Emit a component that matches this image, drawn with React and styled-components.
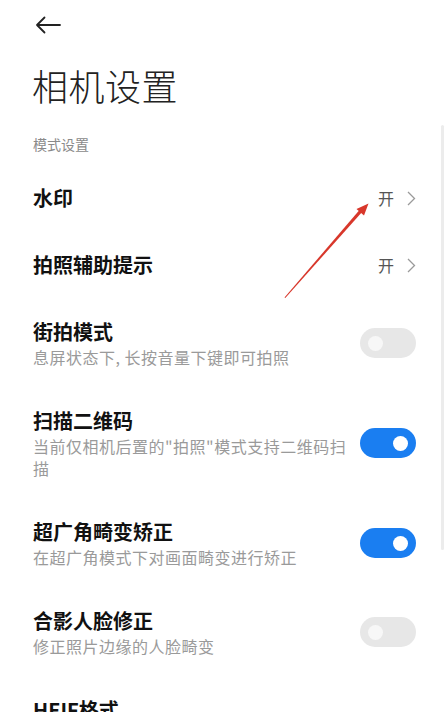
import styled, { createGlobalStyle } from "styled-components";

const GlobalStyle = createGlobalStyle`
  html, body {
    margin: 0;
    padding: 0;
    background: #ffffff;
  }
  body {
    font-family: "Noto Sans CJK SC", "Noto Sans", sans-serif;
    overflow: hidden;
  }
`;

const SETTINGS = [
  { id: "watermark", title: "水印", value: "开" },
  { id: "assist", title: "拍照辅助提示", value: "开" },
  {
    id: "street",
    title: "街拍模式",
    desc: "息屏状态下, 长按音量下键即可拍照",
    toggle: false,
  },
  {
    id: "qrcode",
    title: "扫描二维码",
    desc: '当前仅相机后置的"拍照"模式支持二维码扫描',
    toggle: true,
  },
  {
    id: "wide",
    title: "超广角畸变矫正",
    desc: "在超广角模式下对画面畸变进行矫正",
    toggle: true,
  },
  {
    id: "face",
    title: "合影人脸修正",
    desc: "修正照片边缘的人脸畸变",
    toggle: false,
  },
  { id: "heif", title: "HEIF格式" },
];

const BackIcon = () => (
  <svg width="26" height="18" viewBox="0 0 26 18" fill="none">
    <path
      d="M25 9H2M9.5 1.5L2 9l7.5 7.5"
      stroke="#222"
      strokeWidth="1.8"
      strokeLinecap="round"
      strokeLinejoin="round"
    />
  </svg>
);

const Chevron = () => (
  <svg width="9" height="15" viewBox="0 0 9 15" fill="none">
    <path d="M1 1l6.5 6.5L1 14" stroke="#9a9a9a" strokeWidth="1.3" />
  </svg>
);

const App = () => {
  return (
    <Page>
      <GlobalStyle />
      <TopBar>
        <BackBtn>
          <BackIcon />
        </BackBtn>
      </TopBar>
      <Title>相机设置</Title>
      <SectionLabel>模式设置</SectionLabel>
      <List>
        {SETTINGS.map((item) => (
          <Row key={item.id}>
            <RowText>
              <RowTitle>{item.title}</RowTitle>
              {item.desc && <RowDesc>{item.desc}</RowDesc>}
            </RowText>
            {item.value && (
              <ValueBox>
                <Value>{item.value}</Value>
                <Chevron />
              </ValueBox>
            )}
            {item.toggle !== undefined && (
              <Switch $on={item.toggle}>
                <Knob $on={item.toggle} />
              </Switch>
            )}
          </Row>
        ))}
      </List>
      <ScrollBar />
      <Annotation width="448" height="712" viewBox="0 0 448 712">
        <polygon points="284.5,297.5 285.3,298 362.3,211.8 359.7,209.7" fill="#d8372b" />
        <polygon points="368.5,203.5 356.5,209 364,215.5" fill="#d8372b" />
      </Annotation>
    </Page>
  );
};

const Page = styled.div`
  position: relative;
  width: 448px;
  height: 712px;
  overflow: hidden;
  background: #fff;
`;

const TopBar = styled.div`
  height: 50px;
  display: flex;
  align-items: center;
  padding-left: 35px;
`;

const BackBtn = styled.button`
  border: none;
  background: transparent;
  padding: 0;
  display: flex;
  cursor: pointer;
`;

const Title = styled.h1`
  margin: 10px 0 0 0;
  padding-left: 32px;
  font-size: 36px;
  line-height: 50px;
  font-weight: 300;
  color: #222;
  letter-spacing: 0.5px;
`;

const SectionLabel = styled.div`
  margin-top: 24px;
  padding-left: 33px;
  font-size: 14px;
  line-height: 20px;
  color: #8a8a8a;
`;

const List = styled.ul`
  list-style: none;
  margin: 0;
  padding: 10.5px 0 0 0;
`;

const Row = styled.li`
  display: flex;
  align-items: center;
  justify-content: space-between;
  gap: 6px;
  padding: 19.5px 32px 19.5px 33px;
`;

const RowText = styled.div`
  display: flex;
  flex-direction: column;
  min-width: 0;
  flex: 1;
`;

const RowTitle = styled.div`
  font-size: 20px;
  line-height: 28px;
  font-weight: 600;
  color: #111;
`;

const RowDesc = styled.div`
  font-size: 16px;
  line-height: 22px;
  color: #9a9a9a;
  letter-spacing: 0.5px;
`;

const ValueBox = styled.div`
  display: flex;
  align-items: center;
  gap: 13px;
`;

const Value = styled.span`
  font-size: 16px;
  color: #555;
`;

const Switch = styled.div`
  flex-shrink: 0;
  width: 56px;
  height: 30px;
  border-radius: 15px;
  background: ${(p) => (p.$on ? "#1a7ef1" : "#e7e7e7")};
  display: flex;
  align-items: center;
  justify-content: ${(p) => (p.$on ? "flex-end" : "flex-start")};
  padding: 0 8px;
  box-sizing: border-box;
`;

const Knob = styled.div`
  width: 15px;
  height: 15px;
  border-radius: 50%;
  background: ${(p) => (p.$on ? "#ffffff" : "#f7f7f7")};
`;

const ScrollBar = styled.div`
  position: absolute;
  right: 4px;
  top: 125px;
  width: 3px;
  height: 425px;
  border-radius: 2px;
  background: #ececec;
`;

const Annotation = styled.svg`
  position: absolute;
  left: 0;
  top: 0;
  pointer-events: none;
`;

export default App;
